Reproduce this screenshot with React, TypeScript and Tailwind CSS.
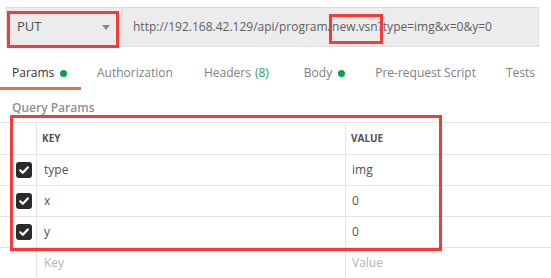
import React from "react";

const Check = () => (
  <div className="w-[16px] h-[16px] rounded-[3px] bg-[#2b2b2b] flex items-center justify-center">
    <svg width="12" height="12" viewBox="0 0 12 12">
      <path d="M2.2 6.3 L4.8 8.8 L9.8 3.4" stroke="#fff" strokeWidth="2.2" fill="none" strokeLinecap="round" strokeLinejoin="round" />
    </svg>
  </div>
);

const Dot = () => <span className="inline-block w-[7px] h-[7px] rounded-full bg-[#0ca04c] ml-[6px]" />;

const rows = [
  { k: "type", v: "img" },
  { k: "x", v: "0" },
  { k: "y", v: "0" },
];

export default function App() {
  return (
    <div className="relative w-[551px] h-[278px] bg-white overflow-hidden font-['Open_Sans',sans-serif] text-[#505050] whitespace-nowrap">
      {/* request bar */}
      <div className="pt-[7px] pl-[6px] pr-[12px]">
        <div className="flex h-[40px] bg-[#ececec] border border-[#dcdcdc]">
          <div className="w-[116px] flex items-center justify-between pl-[10px] pr-[8px] border-r border-[#dcdcdc]">
            <span className="text-[13px] text-[#505050]">PUT</span>
            <svg width="8" height="5" viewBox="0 0 8 5" className="mr-[4px]">
              <path d="M0 0 L8 0 L4 5 Z" fill="#8a8a8a" />
            </svg>
          </div>
          <div className="flex items-center pl-[10px] text-[12px] text-[#606060]">
            http://192.168.42.129/api/program/new.vsn?type=img&amp;x=0&amp;y=0
          </div>
        </div>
      </div>

      {/* tabs */}
      <div className="flex h-[43px] text-[12px] text-[#808080]">
        <div className="flex items-center w-[81px] pl-[12px] border-b-[3px] border-[#f26b3a] text-[#333] pt-[12px]">
          Params<Dot />
        </div>
        <div className="flex items-center ml-[16px] pt-[12px] border-b-[3px] border-transparent">Authorization</div>
        <div className="flex items-center ml-[31px] pt-[12px] border-b-[3px] border-transparent">
          Headers<span className="text-[#26a65b] ml-[4px]">(8)</span>
        </div>
        <div className="flex items-center ml-[35px] pt-[12px] border-b-[3px] border-transparent">
          Body<Dot />
        </div>
        <div className="flex items-center ml-[30px] pt-[12px] border-b-[3px] border-transparent">Pre-request Script</div>
        <div className="flex items-center ml-[30px] pt-[12px] border-b-[3px] border-transparent">Tests</div>
      </div>

      {/* query params label */}
      <div className="h-[32px] flex items-center pl-[12px] pt-[4px] text-[12px] font-semibold text-[#909090]">Query Params</div>

      {/* table */}
      <div className="border-t border-[#e4e4e4]">
        <div className="grid grid-cols-[37px_309px_1fr] h-[32px] border-b border-[#e4e4e4]">
          <div className="border-r border-[#e4e4e4]" />
          <div className="flex items-center pl-[5px] border-r border-[#e4e4e4] text-[10px] font-bold text-[#505050]">KEY</div>
          <div className="flex items-center pl-[5px] text-[10px] font-bold text-[#505050]">VALUE</div>
        </div>
        {rows.map((r) => (
          <div key={r.k} className="grid grid-cols-[37px_309px_1fr] h-[31px] border-b border-[#e4e4e4]">
            <div className="flex items-center pl-[16px] border-r border-[#e4e4e4]">
              <Check />
            </div>
            <div className="flex items-center pl-[7px] pb-[1px] border-r border-[#e4e4e4] text-[12px] text-[#505050]">{r.k}</div>
            <div className="flex items-center pl-[6px] pb-[1px] text-[12px] text-[#505050]">{r.v}</div>
          </div>
        ))}
        <div className="grid grid-cols-[37px_309px_1fr] h-[31px] border-b border-[#e4e4e4]">
          <div className="border-r border-[#e4e4e4]" />
          <div className="flex items-center pl-[7px] pb-[1px] border-r border-[#e4e4e4] text-[12px] text-[#b4b4b4]">Key</div>
          <div className="flex items-center pl-[6px] pb-[1px] text-[12px] text-[#b4b4b4]">Value</div>
        </div>
      </div>

      {/* annotation boxes */}
      <div className="absolute left-[7px] top-[11px] w-[112px] h-[37px] border-[3px] border-[#f23c3c]" />
      <div className="absolute left-[329px] top-[14px] w-[54px] h-[30px] border-[3px] border-[#f23c3c]" />
      <div className="absolute left-[10px] top-[115px] w-[432px] h-[136px] border-[3px] border-[#f23c3c]" />
    </div>
  );
}
